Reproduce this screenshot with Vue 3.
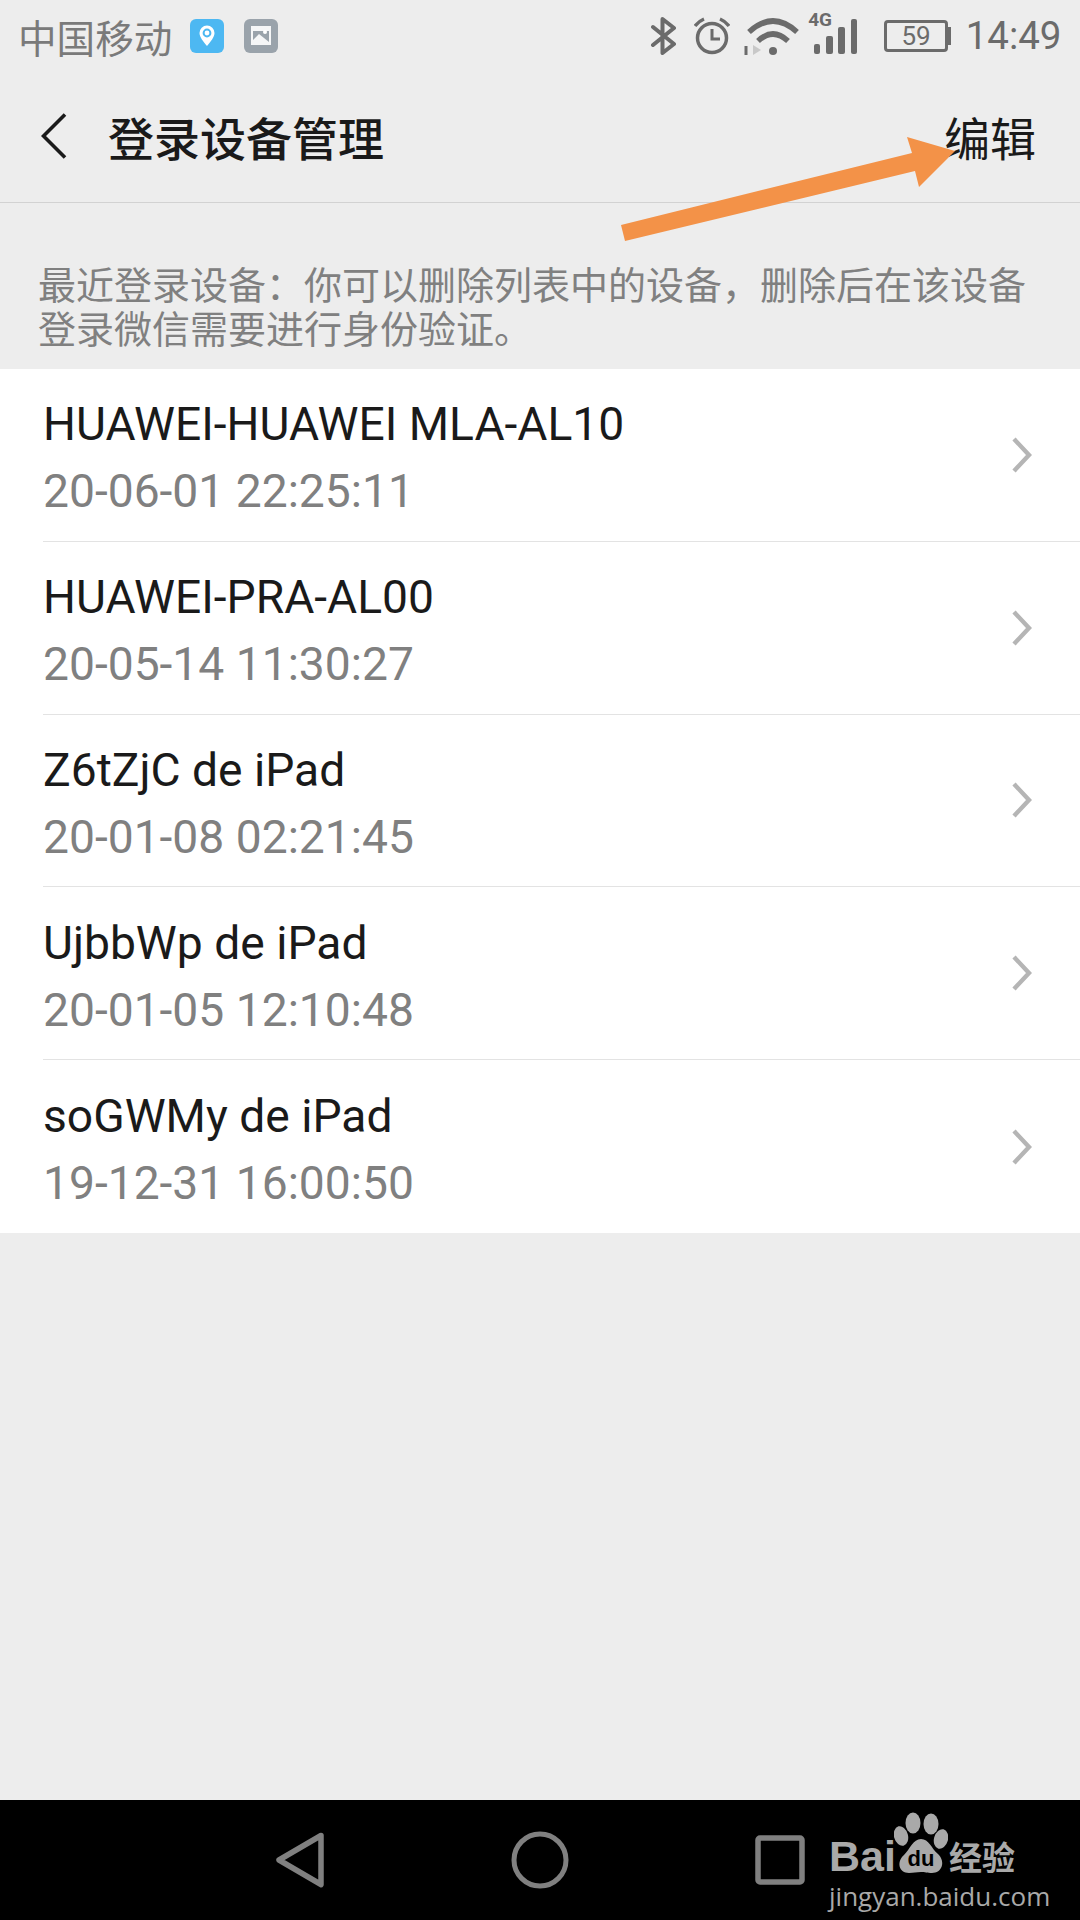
<template>
  <div class="screen">
    <!-- status bar -->
    <div class="status">
      <span class="carrier">中国移动</span>
      <svg class="note first" width="34" height="34" viewBox="0 0 34 34">
        <rect width="34" height="34" rx="6" fill="#4db8f2" />
        <path d="M17 27 C13 22 9.5 18 9.5 14 A7.5 7.5 0 0 1 24.5 14 C24.5 18 21 22 17 27Z" fill="#fff" />
        <circle cx="17" cy="14" r="3.4" fill="none" stroke="#4db8f2" stroke-width="2" />
      </svg>
      <svg class="note" width="34" height="34" viewBox="0 0 34 34">
        <rect width="34" height="34" rx="6" fill="#9aa3ab" />
        <rect x="7" y="7" width="20" height="19" fill="#fff" fill-opacity=".9" />
        <path d="M9 21 L15 15 L25 23 V12 H9Z" fill="#9aa3ab" />
        <circle cx="21" cy="13" r="2" fill="#fff" />
      </svg>

      <div class="status-right">
        <svg width="27" height="38" viewBox="0 0 27 38" fill="none" stroke="#6b6b6b" stroke-width="4" stroke-linejoin="round" stroke-linecap="round">
          <path d="M3 10 L24 27 L12.5 36 V2 L24 11 L3 28" />
        </svg>
        <svg class="alarm" width="36" height="38" viewBox="0 0 36 38" fill="none" stroke="#6b6b6b" stroke-width="3.5">
          <circle cx="18" cy="21" r="14.5" />
          <path d="M18 12 V22 H26" stroke-width="3" />
          <path d="M1 9 Q5 4 10 2 M35 9 Q31 4 26 2" stroke-width="3.5" />
        </svg>
        <svg class="wifi" width="56" height="38" viewBox="0 0 56 38" fill="none" stroke="#6b6b6b" stroke-width="5.5">
          <path d="M6 15 Q30 -7 54 15" />
          <path d="M15 24 Q30 10 45 24" />
          <circle cx="30" cy="34" r="4" fill="#6b6b6b" stroke="none" />
          <path d="M3 29 V38" stroke-width="3" />
          <path d="M10 28 V38 L18 33Z" fill="#c8c8c8" stroke="none" />
        </svg>
        <div class="signal">
          <span class="net">4G</span>
          <div class="bars">
            <i class="bar" v-for="h in barHeights" :key="h" :style="{ height: h + 'px' }"></i>
          </div>
        </div>
        <div class="battery">
          <div class="cell">59</div>
          <div class="nub"></div>
        </div>
        <span class="clock">14:49</span>
      </div>
    </div>

    <!-- toolbar -->
    <div class="toolbar">
      <svg class="back" width="26" height="46" viewBox="0 0 26 46" fill="none" stroke="#1a1a1a" stroke-width="3.6">
        <path d="M24 1.5 L2.5 23 L24 44.5" />
      </svg>
      <span class="title">登录设备管理</span>
      <span class="edit">编辑</span>
    </div>

    <!-- hint -->
    <p class="hint">最近登录设备：你可以删除列表中的设备，删除后在该设备登录微信需要进行身份验证。</p>

    <!-- device list -->
    <ul class="devices">
      <li class="device" v-for="d in devices" :key="d.name">
        <div class="device-text">
          <div class="device-name">{{ d.name }}</div>
          <div class="device-time">{{ d.time }}</div>
        </div>
        <svg class="chevron" width="20" height="36" viewBox="0 0 20 36" fill="none" stroke="#b5b5b5" stroke-width="4.4">
          <path d="M2 2 L17 18 L2 34" />
        </svg>
      </li>
    </ul>

    <div class="spacer"></div>

    <!-- nav bar -->
    <div class="navbar">
      <svg width="50" height="56" viewBox="0 0 50 56" fill="none" stroke="#808080" stroke-width="5.5" stroke-linejoin="round">
        <path d="M46 3.5 L4 28 L46 52.5Z" />
      </svg>
      <svg width="58" height="58" viewBox="0 0 58 58" fill="none" stroke="#808080" stroke-width="5">
        <circle cx="29" cy="29" r="26" />
      </svg>
      <svg width="50" height="50" viewBox="0 0 50 50" fill="none" stroke="#808080" stroke-width="5.5" stroke-linejoin="round">
        <rect x="3" y="3" width="44" height="44" rx="2" />
      </svg>

      <!-- watermark sits over the bar -->
      <div class="watermark">
        <div class="wm-top">
          <span class="wm-bai">Bai</span>
          <svg class="wm-paw" width="54" height="62" viewBox="0 0 54 62">
            <ellipse cx="19" cy="11" rx="7.5" ry="10.5" fill="#a9a9a9" />
            <ellipse cx="37" cy="12" rx="7.5" ry="10.5" fill="#a9a9a9" />
            <ellipse cx="7" cy="24" rx="7" ry="10" fill="#a9a9a9" transform="rotate(-15 7 24)" />
            <ellipse cx="47" cy="27" rx="7" ry="10" fill="#a9a9a9" transform="rotate(15 47 27)" />
            <path d="M27 27 C35 27 37 36 44 42 C52 50 48 61 38 61 C33 61 31 60 27 60 C22 60 20 61 15 61 C5 61 2 50 10 43 C16 37 19 27 27 27Z" fill="#a9a9a9" />
            <text x="27" y="54" text-anchor="middle" class="wm-du">du</text>
          </svg>
          <span class="wm-cn">经验</span>
        </div>
        <div class="wm-url">jingyan.baidu.com</div>
      </div>
    </div>

    <!-- annotation arrow drawn on the screenshot -->
    <svg class="arrow" width="1080" height="260" viewBox="0 0 1080 260">
      <path d="M621 225 L912 153 L907 137 L955 151 L919 187 L915 171 L625 241Z" fill="#f39248" />
    </svg>
  </div>
</template>

<script setup>
const barHeights = [10, 18, 27, 35]

const devices = [
  { name: 'HUAWEI-HUAWEI MLA-AL10', time: '20-06-01 22:25:11' },
  { name: 'HUAWEI-PRA-AL00', time: '20-05-14 11:30:27' },
  { name: 'Z6tZjC de iPad', time: '20-01-08 02:21:45' },
  { name: 'UjbbWp de iPad', time: '20-01-05 12:10:48' },
  { name: 'soGWMy de iPad', time: '19-12-31 16:00:50' }
]
</script>

<style scoped>
.screen {
  position: relative;
  width: 1080px;
  height: 1920px;
  display: flex;
  flex-direction: column;
  background: #ededed;
  overflow: hidden;
  font-family: Roboto, "Noto Sans CJK SC", sans-serif;
}

.status {
  height: 72px;
  display: flex;
  align-items: center;
  padding: 0 18.5px 0 18px;
  box-sizing: border-box;
}
.carrier {
  font-family: "Noto Sans CJK SC", sans-serif;
  font-size: 38.6px;
  line-height: 72px;
  color: #7a7a7a;
}
.note {
  margin-left: 20px;
}
.note.first {
  margin-left: 17.6px;
}
.status-right {
  margin-left: auto;
  display: flex;
  align-items: center;
}
.alarm {
  margin-left: 17px;
}
.wifi {
  margin-left: 13px;
}
.signal {
  position: relative;
  margin-left: 9px;
  width: 50px;
  height: 42px;
}
.net {
  position: absolute;
  left: 0;
  top: -5px;
  font-size: 19px;
  font-weight: 700;
  line-height: 20px;
  color: #6b6b6b;
}
.bars {
  position: absolute;
  right: 1px;
  bottom: 3px;
  display: flex;
  align-items: flex-end;
  gap: 5.8px;
}
.bar {
  display: block;
  width: 6.5px;
  background: #6b6b6b;
  border-radius: 2px;
}
.battery {
  margin-left: 26px;
  display: flex;
  align-items: center;
}
.cell {
  width: 64px;
  height: 32px;
  box-sizing: border-box;
  border: 3px solid #6b6b6b;
  border-radius: 4px;
  font-size: 26px;
  line-height: 26px;
  text-align: center;
  color: #6b6b6b;
}
.nub {
  width: 3px;
  height: 18px;
  background: #6b6b6b;
}
.clock {
  margin-left: 14.5px;
  font-size: 38.5px;
  color: #6b6b6b;
  line-height: 72px;
}

.toolbar {
  height: 131px;
  display: flex;
  align-items: center;
  padding: 0 44px 2px 41px;
  box-sizing: border-box;
  border-bottom: 1px solid #d2d2d2;
}
.back {
  margin-right: 41px;
}
.title {
  font-family: "Noto Sans CJK SC", sans-serif;
  font-size: 46px;
  font-weight: 500;
  color: #1a1a1a;
}
.edit {
  margin-left: auto;
  font-family: "Noto Sans CJK SC", sans-serif;
  font-size: 46px;
  color: #1a1a1a;
}

.hint {
  margin: 0;
  padding: 58px 38px 20px;
  font-family: "Noto Sans CJK SC", sans-serif;
  font-size: 38px;
  line-height: 44px;
  color: #808080;
}

.devices {
  margin: 0;
  padding: 0;
  list-style: none;
  background: #fff;
}
.device {
  height: 172.8px;
  box-sizing: border-box;
  margin-left: 43px;
  padding-right: 48px;
  display: flex;
  align-items: center;
  border-bottom: 1px solid #e3e3e3;
}
.device:last-child {
  border-bottom: 0;
}
.device-text {
  flex: 1;
  padding-top: 6px;
}
.device-name {
  font-size: 46.2px;
  line-height: 60px;
  color: #1a1a1a;
}
.device-time {
  margin-top: 7px;
  font-size: 46.2px;
  line-height: 60px;
  color: #808080;
}

.spacer {
  flex: 1;
}

.navbar {
  position: relative;
  height: 120px;
  background: #000;
  display: flex;
  align-items: center;
  padding-left: 275px;
  box-sizing: border-box;
  gap: 186px;
}

.watermark {
  position: absolute;
  left: 829px;
  top: 12px;
  width: 195px;
  color: #a9a9a9;
}
.wm-top {
  display: flex;
  align-items: flex-end;
  height: 62px;
}
.wm-bai {
  font-family: "Liberation Sans", sans-serif;
  font-size: 43px;
  line-height: 36px;
  font-weight: 700;
}
.wm-paw {
  margin-left: -2px;
  flex: none;
}
.wm-du {
  font-family: "Liberation Sans", sans-serif;
  font-size: 22px;
  font-weight: 700;
  fill: #000;
}
.wm-cn {
  margin-left: 1px;
  font-family: "Noto Sans CJK SC", sans-serif;
  font-size: 33px;
  line-height: 36px;
  font-weight: 700;
}
.wm-url {
  margin-top: 8px;
  font-family: "Open Sans", sans-serif;
  font-size: 26px;
  line-height: 28px;
  white-space: nowrap;
}

.arrow {
  position: absolute;
  left: 0;
  top: 0;
  pointer-events: none;
}
</style>
